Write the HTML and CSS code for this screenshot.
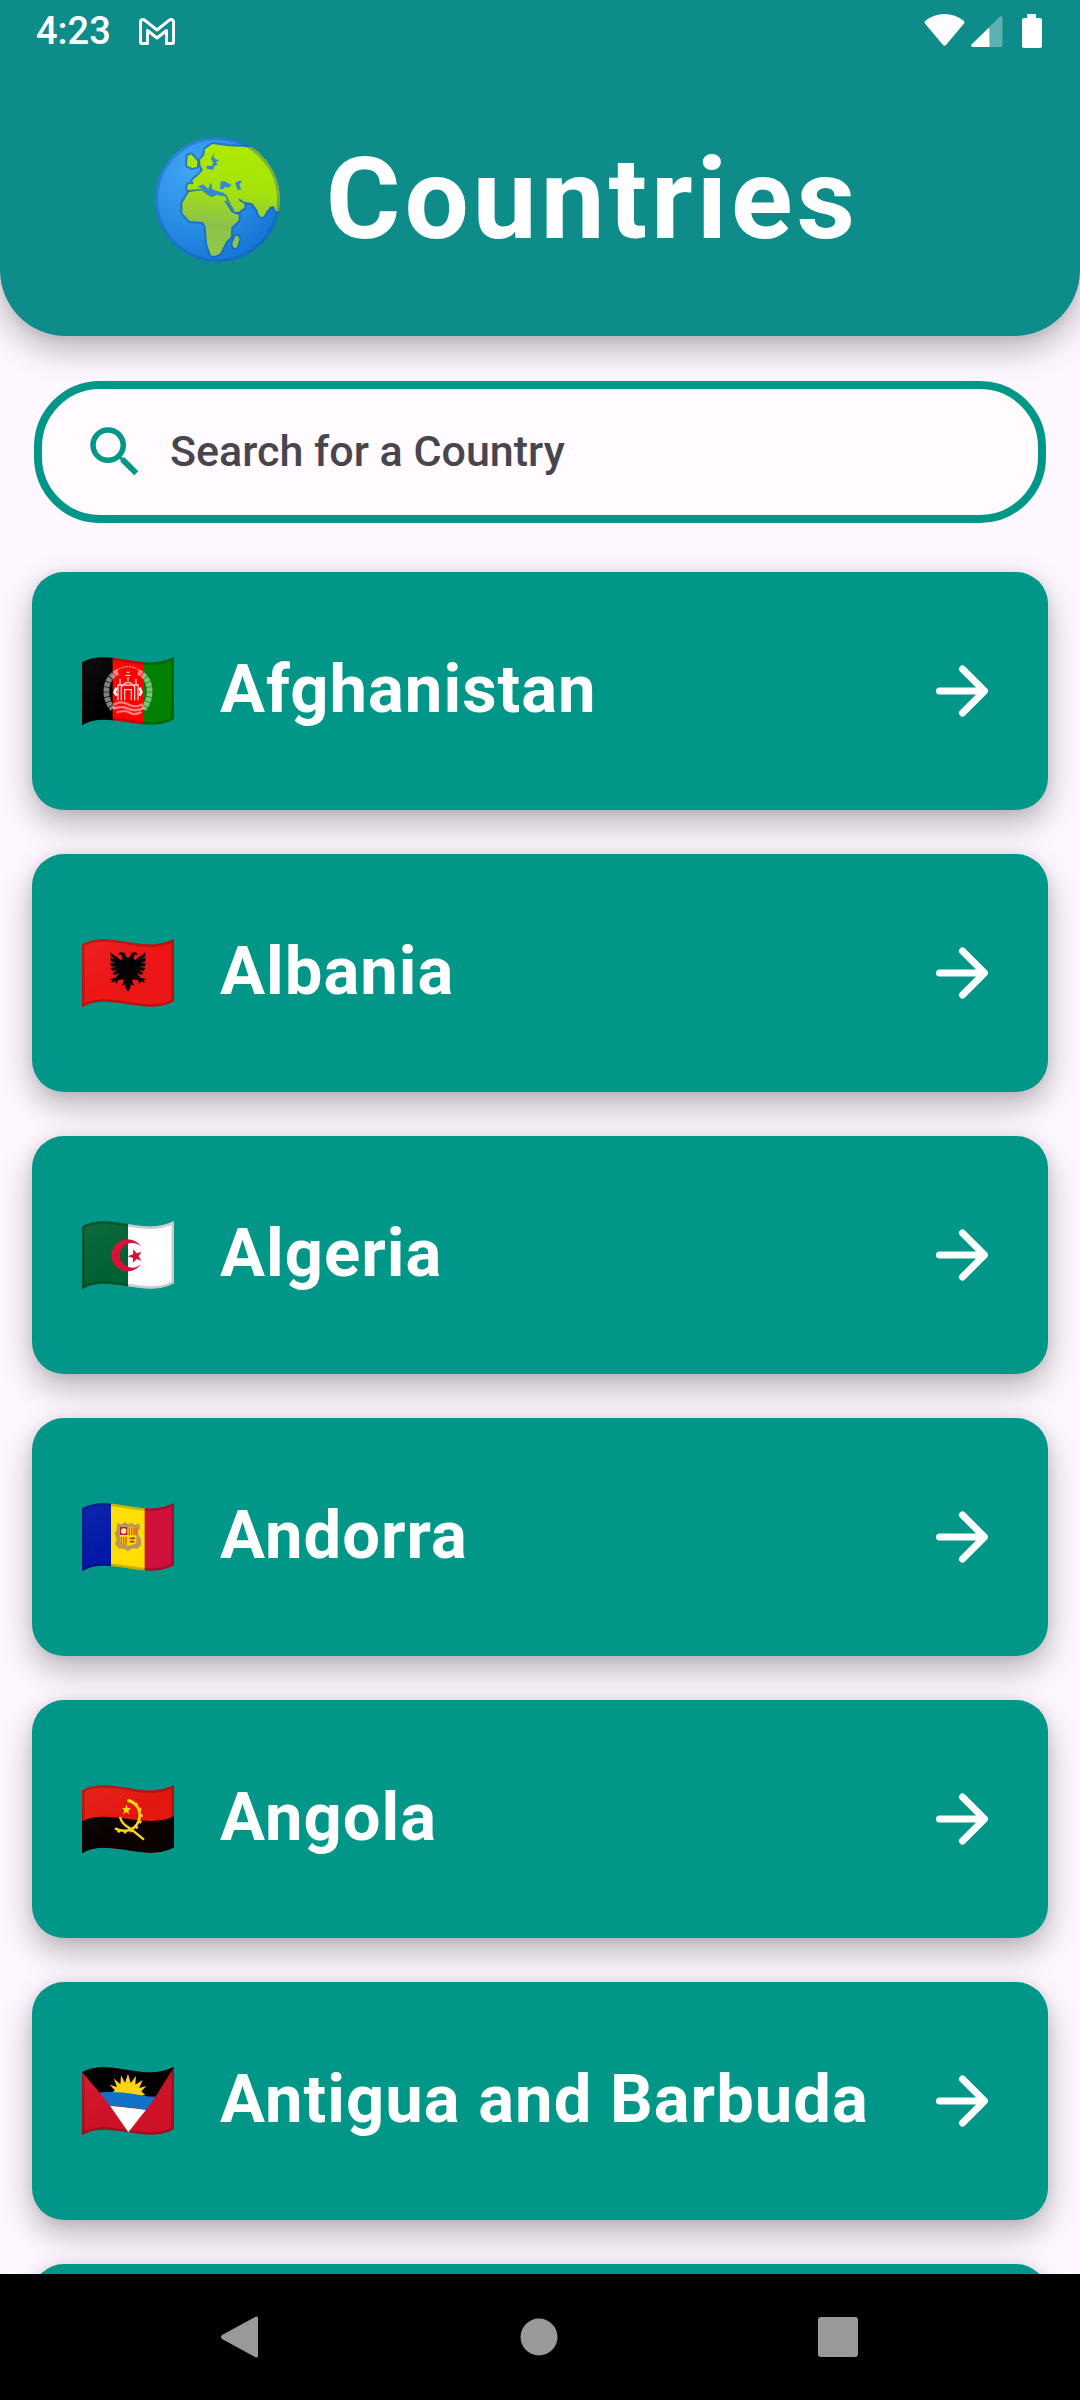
FILE: index.html
```html
<!DOCTYPE html>
<html lang="en">
<head>
<meta charset="utf-8">
<meta name="viewport" content="width=device-width, initial-scale=1">
<title>Countries</title>
<link rel="stylesheet" href="styles.css">
</head>
<body>
<svg class="defs" aria-hidden="true">
  <defs>
    <clipPath id="wave"><path d="M0 16C35-4 75-3 138 9S240 18 276 0V187C240 207 200 206 138 196S36 183 0 205Z"/></clipPath>
    <linearGradient id="sheen" x1="0" y1="0" x2="1" y2="1"><stop offset="0" stop-color="#fff" stop-opacity=".06"/><stop offset=".5" stop-color="#fff" stop-opacity="0"/><stop offset="1" stop-color="#000" stop-opacity=".02"/></linearGradient>
    <symbol id="cloth" viewBox="0 0 276 207">
      <path d="M0 16C35-4 75-3 138 9S240 18 276 0V187C240 207 200 206 138 196S36 183 0 205Z" fill="url(#sheen)" stroke="#000" stroke-opacity=".2" stroke-width="15"/>
    </symbol>
    <symbol id="arrow" viewBox="0 0 52 52"><path d="M3.500 26H48M26.500 4L48.500 26L26.500 48" fill="none" stroke="#fff" stroke-width="7" stroke-linecap="round" stroke-linejoin="round"/></symbol>
  </defs>
</svg>
<div class="screen">
  <header class="header">
    <div class="status">
      <span class="time">4:23</span>
      <svg class="mail" viewBox="0 0 36 27" width="36" height="27" aria-hidden="true"><path d="M8.500 25.500H3Q1.500 25.500 1.500 24V4.500Q1.500 1.500 4 1.500Q5 1.500 6 2.300L18 12L30 2.300Q31 1.500 32 1.500Q34.500 1.500 34.500 4.500V24Q34.500 25.500 33 25.500H27.500V12.500L18 20L8.500 12.500Z" fill="none" stroke="#fff" stroke-width="3" stroke-linejoin="round"/></svg>
      <svg class="signals" viewBox="0 0 118 34" width="118" height="34" aria-hidden="true" fill="#fff">
        <path d="M1 7Q10 0 20.500 0T40 7Q41 8 40 9.500L22 31Q20.500 32.500 19 31L1 9.500Q0 8 1 7Z"/>
        <path d="M66 12L76 2.500Q78.500 1 78.500 4V31Q78.500 33 76.500 33H65Z" opacity=".32"/>
        <path d="M65.500 13V33H48.500Q46 32 48 30Z"/>
        <path d="M103 0H112V4H116Q118 4 118 6V32Q118 34 116 34H100Q98 34 98 32V6Q98 4 100 4H103Z"/>
      </svg>
    </div>
    <div class="heading">
      <svg class="globe" viewBox="78 51 375 375" width="125" height="125" aria-hidden="true">
        <defs>
          <radialGradient id="sea" cx=".3" cy=".25" r=".85"><stop offset="0" stop-color="#42a5f5"/><stop offset=".5" stop-color="#2b8fe6"/><stop offset="1" stop-color="#1273d2"/></radialGradient>
          <linearGradient id="land" gradientUnits="userSpaceOnUse" x1="300" y1="70" x2="260" y2="410"><stop offset="0" stop-color="#aeea00"/><stop offset=".4" stop-color="#a6e20c"/><stop offset=".72" stop-color="#8bc34a"/><stop offset="1" stop-color="#93c847"/></linearGradient>
          <clipPath id="ball"><circle cx="265.500" cy="238.500" r="187.500"/></clipPath>
        </defs>
        <g clip-path="url(#ball)">
          <rect x="78" y="51" width="375" height="375" fill="url(#sea)"/>
          <g fill="url(#land)" stroke="#1565b8" stroke-opacity=".65" stroke-width="12" stroke-linejoin="round" paint-order="stroke">
            <path d="M250 72L300 79L375 82L460 120V272L441 275L434 258L424 260L411 276Q406 292 397 291Q389 288 385 270L370 250L345 245L328 234L332 244L345 250L347 262L330 275L313 277L302 262L290 242L288 229L270 226L262 219L246 231L232 222L203 213L180 213L174 205L177 193L194 192L190 181L208 166L222 150L215 138L213 120L226 105L228 88Z"/>
            <path d="M180 216L204 213L219 212L232 222L246 230L263 224L288 229L302 258L314 280L330 285L328 302L307 322L305 351L290 367L274 400Q258 411 246 406L234 372L230 320L222 306L182 303L160 279V249Z"/>
            <path d="M176 107L187 103L205 124L204 140L190 144L174 137Z"/>
            <path d="M319 349Q330 345 331 358L323 383Q312 386 310 371Z"/>
          </g>
          <path d="M258 93L246 116L252 126L250 137L232 138L234 146L252 150L256 138L266 134L261 127L270 121L258 117L253 108ZM275 185L287 184L307 194L302 202L284 202L286 206L273 208ZM318 188L334 181L338 186L331 193L337 208L326 211ZM205 201L222 193L238 207L244 190L248 193L249 207L264 213L286 219L288 229L266 224L246 231L229 215L217 205Z" fill="#3287d6"/>
          <path d="M289 243L312 277" stroke="#2476c2" stroke-width="6"/>
        </g>
        <circle cx="265.500" cy="238.500" r="183" fill="none" stroke="#1256a5" stroke-opacity=".35" stroke-width="9"/>
      </svg>
      <h1 class="title">Countries</h1>
    </div>
  </header>

  <label class="search">
    <svg class="search-icon" viewBox="0 0 24 24" width="66" height="66" aria-hidden="true"><path fill="#009688" d="M15.500 14h-.79l-.28-.27A6.471 6.471 0 0 0 16 9.500 6.500 6.500 0 1 0 9.500 16c1.610 0 3.090-.59 4.230-1.570l.27.28v.79l5 4.990L20.490 19l-4.990-5zm-6 0C7.010 14 5 11.990 5 9.500S7.010 5 9.500 5 14 7.010 14 9.500 11.990 14 9.500 14z"/></svg>
    <input class="search-input" type="text" placeholder="Search for a Country" aria-label="Search for a Country">
  </label>

  <ul class="list">
    <li><a class="card" href="#afghanistan">
      <svg class="flag" viewBox="0 0 276 207" width="92" height="69" aria-hidden="true"><g clip-path="url(#wave)">
        <path fill="#000" d="M0 0H93V207H0z"/><path fill="#f00" d="M92 0H185V207H92z"/><path fill="#008000" d="M184 0H276V207H184z"/>
        <g fill="none" stroke="#fff">
          <path d="M108 45C68 60 62 120 92 156M168 45C208 60 214 120 184 156" stroke-width="17" stroke-opacity=".5" stroke-dasharray="13 2"/>
          <path d="M104 40Q138 18 172 40" stroke-width="4" stroke-opacity=".6" stroke-dasharray="5 3"/>
          <path d="M108 130V84H168V130M118 130V90Q138 62 158 90V130M128 130V98H148V130M138 72V60M114 84V66M162 84V66M130 55H146M134 46H142" stroke-width="4" stroke-opacity=".8"/>
          <path d="M96 143Q116 130 138 142T182 142M94 155Q118 145 138 155T184 154M104 167Q128 158 144 167T178 165" stroke-width="7" stroke-opacity=".5"/>
          <path d="M103 92L98 106L104 116M173 92L178 106L172 116" stroke-width="8"/>
        </g>
        <use href="#cloth"/></g></svg>
      <span class="name">Afghanistan</span>
      <svg class="arrow" width="52" height="52" aria-hidden="true"><use href="#arrow"/></svg>
    </a></li>
    <li><a class="card" href="#albania">
      <svg class="flag" viewBox="0 0 276 207" width="92" height="69" aria-hidden="true"><g clip-path="url(#wave)">
        <path fill="#ed1515" d="M0 0H276V207H0z"/>
        <path d="M138 58L131 50L128 42L116 39L108 46L118 48L122 56L117 64L106 55L84 40L87 53L101 60L84 56L87 68L103 73L84 72L88 82L104 84L86 87L91 96L107 93L91 103L99 108L112 101L101 116L84 121L92 124L86 132L98 127L104 134L108 124L120 121L126 124L120 140L130 136L131 148L138 158L145 148L146 136L156 140L150 124L156 121L168 124L172 134L178 127L190 132L184 124L192 121L175 116L164 101L177 108L185 103L169 93L185 96L190 87L172 84L188 82L192 72L173 73L189 68L192 56L175 60L189 53L192 40L170 55L159 64L154 56L158 48L168 46L160 39L148 42L145 50Z"/>
        <use href="#cloth"/></g></svg>
      <span class="name">Albania</span>
      <svg class="arrow" width="52" height="52" aria-hidden="true"><use href="#arrow"/></svg>
    </a></li>
    <li><a class="card" href="#algeria">
      <svg class="flag" viewBox="0 0 276 207" width="92" height="69" aria-hidden="true"><g clip-path="url(#wave)">
        <path fill="#006233" d="M0 0H138V207H0z"/><path fill="#fff" d="M138 0H276V207H138z"/>
        <path fill="#d80f36" d="M177 77A48 48 0 1 0 177 129A37 37 0 1 1 177 77ZM137 106L153 100L154 85L164 97L178 93L170 106L178 119L164 114L153 125L153 111Z"/>
        <use href="#cloth"/></g></svg>
      <span class="name">Algeria</span>
      <svg class="arrow" width="52" height="52" aria-hidden="true"><use href="#arrow"/></svg>
    </a></li>
    <li><a class="card" href="#andorra">
      <svg class="flag" viewBox="0 0 276 207" width="92" height="69" aria-hidden="true"><g clip-path="url(#wave)">
        <path fill="#0018a8" d="M0 0H88V207H0z"/><path fill="#fedf00" d="M87 0H189V207H87z"/><path fill="#d0103a" d="M188 0H276V207H188z"/>
        <path fill="#b9975b" d="M105 60L120 64L128 57L138 63L150 59L156 66L172 62L174 76L168 86L171 100L177 108L178 126L166 137L150 136L138 145L127 138L110 136L99 124L104 108L98 92L104 80Z"/>
        <path fill="#fedf00" d="M114 72H163V118Q158 126 138 128Q119 126 114 118Z"/>
        <path fill="#d0103a" d="M114 72H136V96H114z"/><circle cx="125" cy="84" r="8" fill="#fff3b0"/>
        <path stroke="#d9501e" stroke-width="4" d="M142 73V97M149 73V97M156 73V97M162 73V97M118 101V122M125 101V125M132 101V126"/>
        <path stroke="#c4271b" stroke-width="5" d="M143 106H159M143 116H157"/>
        <use href="#cloth"/></g></svg>
      <span class="name">Andorra</span>
      <svg class="arrow" width="52" height="52" aria-hidden="true"><use href="#arrow"/></svg>
    </a></li>
    <li><a class="card" href="#angola">
      <svg class="flag" viewBox="0 0 276 207" width="92" height="69" aria-hidden="true"><g clip-path="url(#wave)">
        <path fill="#e3170f" d="M0 0H276V207H0z"/><path fill="#0a0000" d="M0 109C36 90 80 94 138 102S240 112 276 94V207H0Z"/>
        <g fill="none" stroke="#ffd618"><path d="M136 46C166 52 180 80 170 108C158 138 126 144 99 130" stroke-width="8"/><path d="M142 47C172 56 184 84 174 110C162 141 128 149 97 132" stroke-width="9" stroke-dasharray="8 11"/><path d="M114 96C118 114 132 124 144 130L186 164" stroke-width="7"/></g>
        <path fill="#ffd618" d="M134 58L137 69L147 70L139 77L142 88L133 81L123 87L127 76L119 69L130 69Z"/>
        <use href="#cloth"/></g></svg>
      <span class="name">Angola</span>
      <svg class="arrow" width="52" height="52" aria-hidden="true"><use href="#arrow"/></svg>
    </a></li>
    <li><a class="card" href="#antigua-and-barbuda">
      <svg class="flag" viewBox="0 0 276 207" width="92" height="69" aria-hidden="true"><g clip-path="url(#wave)">
        <path fill="#ce1126" d="M0 0H276V207H0z"/>
        <use href="#cloth"/>
        <path fill="#fff" d="M84 116L192 128L139 196Z"/>
        <path fill="#000" d="M0 0H276L219 92L54 78L0 14Z"/>
        <path fill="#ffd21a" d="M84 80L99 70L83 53L105 60L95 34L115 52L117 25L129 47L138 20L146 48L162 27L160 53L182 39L172 63L193 57L178 73L190 84L170 88L84 80Z"/>
        <path fill="#0f73c9" d="M54 76Q110 72 160 82T221 88L192 129Q140 118 84 117Z"/>
        </g></svg>
      <span class="name">Antigua and Barbuda</span>
      <svg class="arrow" width="52" height="52" aria-hidden="true"><use href="#arrow"/></svg>
    </a></li>
    <li><div class="card"></div></li>
  </ul>

  <nav class="navbar" aria-label="System">
    <button class="nav-button" type="button" aria-label="Back"><svg viewBox="0 0 40 42" width="40" height="42" fill="#999"><path d="M36 .5Q38 0 38 2V40Q38 42 36 41.500L2 23Q0 21 2 19Z"/></svg></button>
    <button class="nav-button" type="button" aria-label="Home"><svg viewBox="0 0 38 38" width="38" height="38" fill="#999"><circle cx="19" cy="19" r="18.500"/></svg></button>
    <button class="nav-button" type="button" aria-label="Recent apps"><svg viewBox="0 0 40 40" width="40" height="40" fill="#999"><rect width="40" height="40" rx="3"/></svg></button>
  </nav>
</div>
</body>
</html>
```
FILE: styles.css
```css
* {
  box-sizing: border-box;
}

body {
  margin: 0;
  background: #fef7ff;
  font-family: Roboto, "Liberation Sans", sans-serif;
}

.defs {
  position: absolute;
  width: 0;
  height: 0;
}

.screen {
  display: flex;
  flex-direction: column;
  height: 100vh;
}

.header {
  flex: none;
  background: #0d8c8a;
  color: #fff;
  border-radius: 0 0 66px 66px;
  box-shadow: 0 14px 32px rgba(0, 0, 0, 0.28), 0 0 12px rgba(0, 0, 0, 0.08);
}

.status {
  display: flex;
  align-items: center;
  height: 64px;
  padding: 0 38px 2px 36px;
}

.time {
  font-size: 38px;
  font-weight: 500;
}

.mail {
  margin-left: 28px;
}

.signals {
  margin-left: auto;
}

.heading {
  display: flex;
  align-items: center;
  justify-content: center;
  gap: 46px;
  height: 272px;
  padding: 0 66px 2px 0;
}

.title {
  margin: 0;
  font-size: 114px;
  font-weight: 700;
  letter-spacing: 4px;
}

.search {
  flex: none;
  display: flex;
  align-items: center;
  gap: 22px;
  height: 142px;
  margin: 45px 34px 0;
  padding: 0 40px;
  border: 8px solid #009688;
  border-radius: 66px;
  background: #fffbff;
}

.search-input {
  flex: 1;
  min-width: 0;
  padding: 0 0 2px;
  border: 0;
  outline: 0;
  background: none;
  color: #49454f;
  font: 500 43px Roboto, "Liberation Sans", sans-serif;
}

.search-input::placeholder {
  color: #49454f;
  opacity: 1;
}

.list {
  flex: 1;
  display: flex;
  flex-direction: column;
  gap: 44px;
  min-height: 0;
  margin: 0;
  padding: 49px 32px 0;
  overflow-y: auto;
  scrollbar-width: none;
  list-style: none;
}

.card {
  display: flex;
  align-items: center;
  height: 238px;
  padding: 0 60px 0 50px;
  border-radius: 32px;
  background: #009688;
  color: #fff;
  text-decoration: none;
  box-shadow: 0 14px 32px rgba(0, 0, 0, 0.28), 0 0 12px rgba(0, 0, 0, 0.08);
}

.name {
  flex: 1;
  margin-left: 46px;
  padding-bottom: 4px;
  font-size: 67px;
  font-weight: 700;
  letter-spacing: 1px;
}

.navbar {
  flex: none;
  display: flex;
  align-items: center;
  justify-content: center;
  gap: 199px;
  height: 126px;
  padding-right: 2px;
  background: #000;
}

.nav-button {
  display: flex;
  align-items: center;
  justify-content: center;
  width: 100px;
  height: 100px;
  padding: 0;
  border: 0;
  background: none;
}
```
